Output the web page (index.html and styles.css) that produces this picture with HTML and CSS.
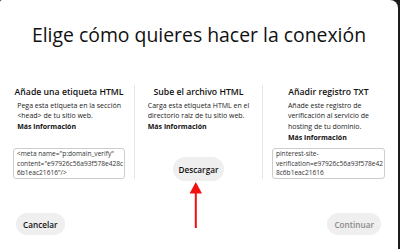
FILE: index.html
```html
<!DOCTYPE html>
<html lang="es">
<head>
<meta charset="utf-8">
<title>Elige cómo quieres hacer la conexión</title>
<link rel="stylesheet" href="styles.css">
</head>
<body>
<div class="modal">
  <h1 class="title">Elige cómo quieres hacer la conexión</h1>
  <div class="cols">
    <section class="col">
      <h2 class="col-title">Añade una etiqueta HTML</h2>
      <p class="desc">Pega esta etiqueta en la sección<br>&lt;head&gt; de tu sitio web.<br><b>Más información</b></p>
      <div class="code">&lt;meta name="p:domain_verify"<br>content="e97926c56a93f578e428c<br>6b1eac21616"/&gt;</div>
    </section>
    <section class="col">
      <h2 class="col-title">Sube el archivo HTML</h2>
      <p class="desc">Carga esta etiqueta HTML en el<br>directorio raíz de tu sitio web.<br><b>Más información</b></p>
      <button class="btn btn-download">Descargar</button>
    </section>
    <section class="col">
      <h2 class="col-title">Añadir registro TXT</h2>
      <p class="desc">Añade este registro de<br>verificación al servicio de<br>hosting de tu dominio.<br><b>Más información</b></p>
      <div class="code">pinterest-site-<br>verification=e97926c56a93f578e42<br>8c6b1eac21616</div>
    </section>
  </div>
  <div class="footer">
    <button class="btn">Cancelar</button>
    <button class="btn btn-disabled">Continuar</button>
  </div>
  <svg class="arrow" width="14" height="48" viewBox="0 0 14 48">
    <polygon points="6.8,1 13,12.5 0.6,12.5" fill="#f2100f"/>
    <rect x="5.8" y="12" width="2" height="35" fill="#f2100f"/>
  </svg>
</div>
</body>
</html>
```
FILE: styles.css
```css
* { box-sizing: border-box; margin: 0; padding: 0; }
html, body { width: 400px; height: 249px; overflow: hidden; }
body {
  background: #1c1c1c;
  font-family: "Open Sans", "Noto Sans", sans-serif;
  color: #111;
}
.modal {
  position: relative;
  width: 398px;
  height: 249px;
  background: #fff;
  border-radius: 2px 8px 0 0;
  display: flex;
  flex-direction: column;
}
.title {
  margin-top: 23px;
  font-size: 19.4px;
  font-weight: 400;
  line-height: 24px;
  text-align: center;
}
.cols {
  display: grid;
  grid-template-columns: repeat(3, 1fr);
  margin: 38px 4px 0;
  height: 94px;
}
.col {
  display: flex;
  flex-direction: column;
  align-items: center;
  padding: 1.5px 9px 0;
  border-right: 1px solid #e6e6e6;
}
.col:last-child { border-right: 0; }
.col-title {
  font-size: 8.7px;
  font-weight: 600;
  line-height: 11px;
}
.desc {
  margin-top: 3px;
  font-size: 7px;
  line-height: 10.7px;
  text-align: left;
  color: #222;
}
.desc b { font-weight: 700; color: #111; }
.code {
  margin-top: auto;
  align-self: stretch;
  height: 31px;
  border: 1px solid #cdcdcd;
  border-radius: 3px;
  padding: 0 1px 0 3px;
  font-size: 6.6px;
  line-height: 9.6px;
  color: #333;
  white-space: nowrap;
}
.btn {
  font-family: inherit;
  font-size: 8.2px;
  font-weight: 600;
  color: #111;
  background: #efefef;
  border: 0;
  border-radius: 12px;
  height: 22px;
  padding: 0 7px;
}
.btn-download {
  margin-top: auto;
  margin-bottom: -2px;
  height: 24px;
  padding: 0 6px;
}
.btn-disabled { color: #8a8a8a; }
.footer {
  display: flex;
  justify-content: space-between;
  margin-top: 34px;
  padding: 0 17px 0 16px;
}
.arrow {
  position: absolute;
  left: 189px;
  top: 181px;
}
```
